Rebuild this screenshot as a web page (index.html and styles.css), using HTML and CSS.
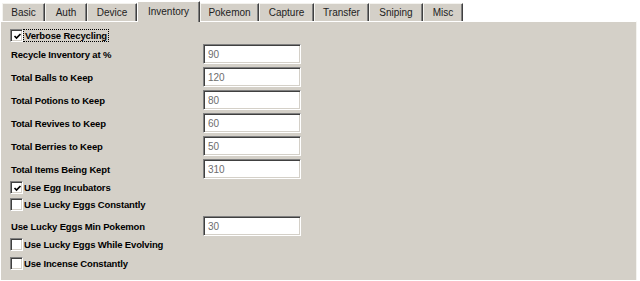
FILE: index.html
```html
<!DOCTYPE html>
<html lang="en">
<head>
    <meta charset="UTF-8">
    <meta name="viewport" content="width=device-width, initial-scale=1.0">
    <title>Settings - Inventory</title>
    <link rel="stylesheet" href="styles.css">
</head>
<body>

    <div class="tabs">
        <div class="tab">Basic</div>
        <div class="tab">Auth</div>
        <div class="tab">Device</div>
        <div class="tab active">Inventory</div>
        <div class="tab">Pokemon</div>
        <div class="tab">Capture</div>
        <div class="tab">Transfer</div>
        <div class="tab">Sniping</div>
        <div class="tab">Misc</div>
    </div>

    <div class="panel">
        <label class="check">
            <span class="box"><svg width="9" height="9" viewBox="0 0 9 9"><path d="M1.5 4 L3.5 6 L7.5 2" fill="none" stroke="#000" stroke-width="1.7"/></svg></span>
            <span class="focus">Verbose Recycling</span>
        </label>

        <div class="field">
            <span class="label">Recycle Inventory at %</span>
            <input class="text" type="text" value="90" readonly>
        </div>
        <div class="field">
            <span class="label">Total Balls to Keep</span>
            <input class="text" type="text" value="120" readonly>
        </div>
        <div class="field">
            <span class="label">Total Potions to Keep</span>
            <input class="text" type="text" value="80" readonly>
        </div>
        <div class="field">
            <span class="label">Total Revives to Keep</span>
            <input class="text" type="text" value="60" readonly>
        </div>
        <div class="field">
            <span class="label">Total Berries to Keep</span>
            <input class="text" type="text" value="50" readonly>
        </div>
        <div class="field">
            <span class="label">Total Items Being Kept</span>
            <input class="text" type="text" value="310" readonly>
        </div>

        <label class="check">
            <span class="box"><svg width="9" height="9" viewBox="0 0 9 9"><path d="M1.5 4 L3.5 6 L7.5 2" fill="none" stroke="#000" stroke-width="1.7"/></svg></span>
            <span>Use Egg Incubators</span>
        </label>
        <label class="check">
            <span class="box"></span>
            <span>Use Lucky Eggs Constantly</span>
        </label>

        <div class="field gap">
            <span class="label">Use Lucky Eggs Min Pokemon</span>
            <input class="text" type="text" value="30" readonly>
        </div>

        <label class="check">
            <span class="box"></span>
            <span>Use Lucky Eggs While Evolving</span>
        </label>
        <label class="check gap">
            <span class="box"></span>
            <span>Use Incense Constantly</span>
        </label>
    </div>

</body>
</html>
```

FILE: styles.css
```css
body {
    margin: 0;
    background-color: #fff;
    font-family: "Liberation Sans", Arial, sans-serif;
    font-size: 10px;
    color: #000;
    height: 281px;
    overflow: hidden;
}
.tabs {
    display: flex;
    align-items: flex-end;
    height: 21px;
    padding-left: 2px;
}
.tab {
    height: 17px;
    line-height: 17px;
    text-align: center;
    background-color: #d4d0c8;
    border-top: 1px solid #f4f3ef;
    border-left: 1px solid #f4f3ef;
    border-right: 1px solid #404040;
    box-shadow: inset -1px 0 #808080;
    color: #222;
}
.tab:nth-child(1) { width: 41px; }
.tab:nth-child(2) { width: 40px; }
.tab:nth-child(3) { width: 48px; }
.tab:nth-child(4) { width: 61px; }
.tab:nth-child(5) { width: 57px; }
.tab:nth-child(6) { width: 53px; }
.tab:nth-child(7) { width: 53px; }
.tab:nth-child(8) { width: 52px; }
.tab:nth-child(9) { width: 38px; }
.tab.active {
    height: 20px;
    line-height: 19px;
    margin-bottom: -1px;
    position: relative;
    z-index: 1;
    border-top-color: #fff;
    border-left-color: #fff;
}
.panel {
    height: 259px;
    background-color: #d4d0c8;
    border-top: 1px solid #fff;
    border-left: 1px solid #fff;
    border-right: 1px solid #f4f3ef;
    width: 637px;
    padding: 5px 0 0 9px;
    box-sizing: border-box;
    font-size: 9.5px;
    font-weight: bold;
    letter-spacing: -0.15px;
}
.check {
    display: flex;
    align-items: center;
    height: 17px;
}
.check.gap {
    margin-top: 2px;
}
.box {
    width: 13px;
    height: 13px;
    box-sizing: border-box;
    background-color: #fff;
    border-top: 1px solid #808080;
    border-left: 1px solid #808080;
    border-right: 1px solid #fff;
    border-bottom: 1px solid #fff;
    box-shadow: inset 1px 1px #404040, inset -1px -1px #d4d0c8;
    display: flex;
    align-items: center;
    justify-content: center;
    margin-right: 1px;
}
.box svg {
    margin: 1px 0 0 1px;
}
.focus {
    outline: 1px dotted #000;
    padding: 0 1px;
}
.field {
    display: flex;
    align-items: center;
    height: 20px;
}
.field + .field,
.field.gap {
    margin-top: 3px;
}
.label {
    width: 192px;
    padding-left: 1px;
}
.text {
    width: 98px;
    height: 20px;
    box-sizing: border-box;
    margin: 0;
    padding: 1px 4px 0;
    background-color: #fff;
    border-top: 1px solid #808080;
    border-left: 1px solid #808080;
    border-right: 1px solid #fff;
    border-bottom: 1px solid #fff;
    box-shadow: inset 1px 1px #404040, inset -1px -1px #d4d0c8;
    font-family: "Liberation Sans", Arial, sans-serif;
    font-size: 10px;
    letter-spacing: 0;
    color: #6d6d6d;
    outline: none;
}
```
